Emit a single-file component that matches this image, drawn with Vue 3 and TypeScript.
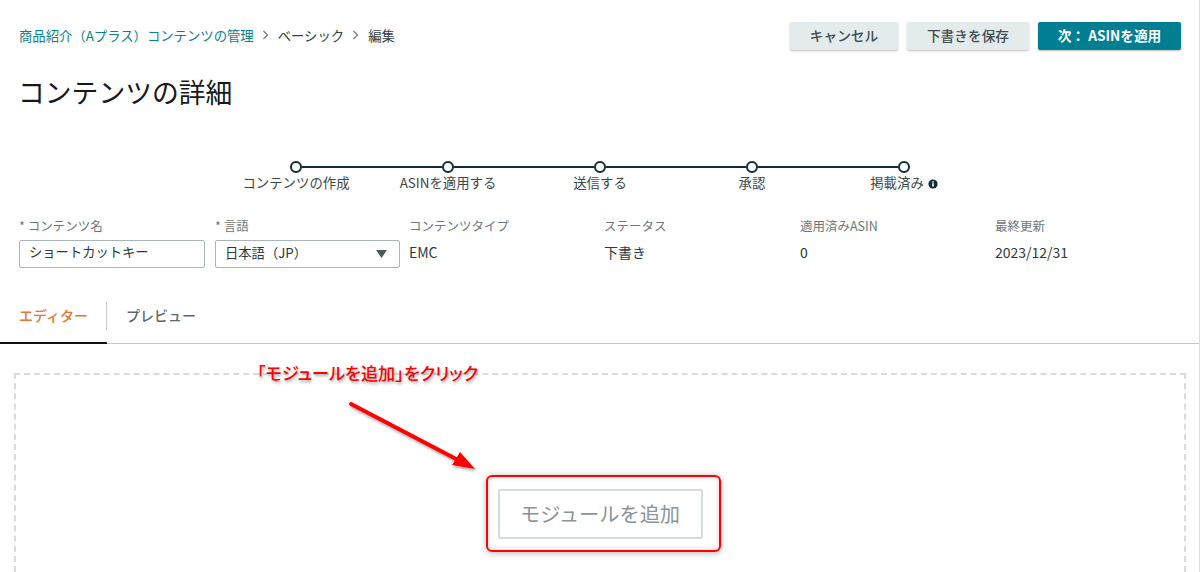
<script setup lang="ts">
const steps: string[] = ['コンテンツの作成', 'ASINを適用する', '送信する', '承認', '掲載済み']
const infos = [
  { label: 'コンテンツタイプ', value: 'EMC' },
  { label: 'ステータス', value: '下書き' },
  { label: '適用済みASIN', value: '0' },
  { label: '最終更新', value: '2023/12/31' },
]
</script>

<template>
  <div class="page">
    <header class="top">
      <nav class="crumbs">
        <a class="link">商品紹介（Aプラス）コンテンツの管理</a>
        <svg class="chev" width="8" height="10" viewBox="0 0 8 10"><path d="M1.5 1l4 4-4 4" fill="none" stroke="#6c7778" stroke-width="1.2" /></svg>
        <span>ベーシック</span>
        <svg class="chev" width="8" height="10" viewBox="0 0 8 10"><path d="M1.5 1l4 4-4 4" fill="none" stroke="#6c7778" stroke-width="1.2" /></svg>
        <span>編集</span>
      </nav>
      <div class="actions">
        <button class="btn">キャンセル</button>
        <button class="btn">下書きを保存</button>
        <button class="btn primary">次： ASINを適用</button>
      </div>
    </header>

    <h1 class="title">コンテンツの詳細</h1>

    <ol class="stepper">
      <li v-for="(s, i) in steps" :key="s" class="step">
        <div class="track">
          <span class="seg" :class="{ off: i === 0 }"></span>
          <span class="dot"></span>
          <span class="seg" :class="{ off: i === steps.length - 1 }"></span>
        </div>
        <div class="step-label">
          {{ s }}<svg v-if="i === steps.length - 1" class="info" width="10" height="10" viewBox="0 0 10 10">
            <circle cx="5" cy="5" r="4.6" fill="#0f2b33" />
            <rect x="4.2" y="4.2" width="1.6" height="3.4" fill="#fff" />
            <rect x="4.2" y="2.2" width="1.6" height="1.4" fill="#fff" />
          </svg>
        </div>
      </li>
    </ol>

    <section class="fields">
      <div class="field">
        <label class="flabel"><i>*</i> コンテンツ名</label>
        <div class="input">ショートカットキー</div>
      </div>
      <div class="field">
        <label class="flabel"><i>*</i> 言語</label>
        <div class="input select">
          <span>日本語（JP）</span>
          <svg width="11" height="8" viewBox="0 0 11 8"><path d="M0 0h11L5.5 8z" fill="#4c5859" /></svg>
        </div>
      </div>
      <div v-for="f in infos" :key="f.label" class="field">
        <label class="flabel">{{ f.label }}</label>
        <div class="value">{{ f.value }}</div>
      </div>
    </section>

    <div class="tabs">
      <div class="tab active">エディター</div>
      <div class="tab">プレビュー</div>
    </div>

    <main class="canvas">
      <div class="addwrap">
        <div class="add">モジュールを追加</div>
      </div>
    </main>

    <div class="note">「モジュールを追加」をクリック</div>
    <svg class="arrow" width="140" height="80" viewBox="0 0 140 80">
      <defs>
        <filter id="sh" x="-20%" y="-20%" width="140%" height="150%">
          <feDropShadow dx="1" dy="2" stdDeviation="1.5" flood-color="#000" flood-opacity="0.35" />
        </filter>
      </defs>
      <g filter="url(#sh)">
        <path d="M9 9L116 65" stroke="#f00" stroke-width="4" stroke-linecap="round" fill="none" />
        <path d="M133 74L110 70L118 57z" fill="#f00" />
      </g>
    </svg>
  </div>
</template>

<style>
html, body { margin: 0; background: #fff; }
</style>

<style scoped>
.page {
  position: relative;
  width: 1200px;
  height: 572px;
  overflow: hidden;
  background: #fff;
  color: #2b3a3c;
  font-family: "Noto Sans CJK JP", "Noto Sans", sans-serif;
  font-size: 13px;
  box-sizing: border-box;
  border-right: 1px solid #d8dcdc;
}
.top {
  display: flex;
  justify-content: space-between;
  align-items: center;
  padding: 22px 18px 0 19px;
  height: 28px;
}
.crumbs { display: flex; align-items: center; gap: 7px; font-size: 13.35px; color: #333f41; padding-bottom: 2px; }
.link { color: #0a7f92; }
.chev { margin: 0 1px; }
.actions { display: flex; gap: 9px; }
.btn {
  font-family: inherit;
  font-size: 13.7px;
  font-weight: 500;
  height: 28px;
  border: 0;
  border-radius: 2px;
  background: #e3ebec;
  color: #3f4c4e;
  box-shadow: 0 1px 2px rgba(0, 0, 0, .25);
  padding: 0 0 3px;
  width: 108px;
}
.btn + .btn { width: 122px; }
.btn.primary { background: #007e92; color: #fff; width: 143px; font-weight: 700; }
.title {
  margin: 23px 0 0 18px;
  font-size: 26.8px;
  line-height: 38px;
  font-weight: 400;
  color: #16191a;
}
.stepper {
  list-style: none;
  display: flex;
  margin: 0;
  padding: 50px 0 0 220px;
}
.step { width: 152px; }
.track { display: flex; align-items: center; height: 12px; }
.seg { flex: 1; height: 2px; background: #0f2b33; }
.seg.off { background: transparent; }
.dot {
  width: 8px;
  height: 8px;
  border: 2px solid #0f2b33;
  border-radius: 50%;
  background: #fff;
}
.step-label {
  text-align: center;
  font-size: 13.4px;
  line-height: 18px;
  color: #3b484a;
  white-space: nowrap;
}
.info { margin-left: 4px; vertical-align: -1px; }
.fields {
  display: grid;
  grid-template-columns: 196px 194px 195px 196px 195px 1fr;
  padding: 26px 0 0 19px;
}
.flabel { display: block; font-size: 12.5px; line-height: 18px; color: #6c7778; }
.flabel i { font-style: normal; }
.input {
  box-sizing: border-box;
  width: 186px;
  height: 28px;
  margin-top: 5px;
  border: 1px solid #a9b6b8;
  border-radius: 2px;
  padding: 0 9px 3px;
  font-size: 13.3px;
  line-height: 22px;
  color: #2b3a3c;
}
.select { width: 185px; display: flex; justify-content: space-between; align-items: center; padding-right: 12px; }
.select svg { margin-top: 3px; }
.value { margin-top: 5px; height: 28px; line-height: 25px; font-size: 14px; color: #2b3a3c; }
.tabs {
  display: flex;
  margin-top: 18px;
  height: 58px;
  border-bottom: 1px solid #c3c9ca;
  box-sizing: border-box;
}
.tab {
  position: relative;
  width: 107px;
  box-sizing: border-box;
  padding: 19px 0 0 19px;
  font-size: 14px;
  font-weight: 500;
  line-height: 20px;
  color: #5b6769;
}
.tab.active { color: #e8762d; border-bottom: 2px solid #111; height: 58px; }
.tab.active::after {
  content: "";
  position: absolute;
  right: 0;
  top: 16px;
  height: 28px;
  width: 1px;
  background: #c3c9ca;
}
.canvas {
  margin: 29px 13px 0 14px;
  height: 260px;
  border: 2px dashed #d8dcdc;
  box-sizing: border-box;
  display: flex;
  justify-content: center;
  align-items: flex-start;
  padding-top: 100px;
}
.addwrap {
  box-sizing: border-box;
  width: 235px;
  height: 77px;
  margin-left: 6px;
  border: 2px solid #f00;
  border-radius: 6px;
  display: flex;
  align-items: center;
  justify-content: center;
  box-shadow: 0 1px 6px rgba(0, 0, 0, .3), inset 0 0 5px rgba(0, 0, 0, .2);
}
.add {
  box-sizing: border-box;
  width: 205px;
  height: 50px;
  margin-right: 6px;
  border: 2px solid #d4dcdc;
  border-radius: 2px;
  background: #fff;
  color: #8a9596;
  font-size: 20.2px;
  line-height: 46px;
  text-align: center;
}
.note {
  position: absolute;
  left: 257px;
  top: 360px;
  font-size: 17.2px;
  line-height: 26px;
  color: #f00;
  font-weight: 500;
  font-feature-settings: "palt";
  white-space: nowrap;
  text-shadow: 1px 2px 3px rgba(0, 0, 0, .35);
}
.arrow { position: absolute; left: 342px; top: 395px; }
</style>
